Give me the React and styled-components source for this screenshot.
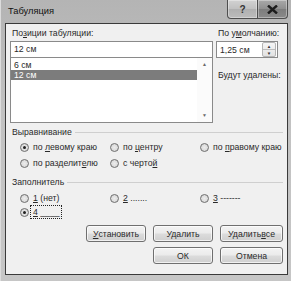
import React from 'react'
import styled, { createGlobalStyle } from 'styled-components'

const GlobalStyle = createGlobalStyle`
    html, body {
        margin: 0;
        padding: 0;
        background: #ffffff;
    }
    body {
        font-family: "Liberation Sans", Arial, sans-serif;
        font-size: 8.7px;
        color: #2a2a2a;
    }
`

const App = () => {
    return (
        <>
            <GlobalStyle />
            <Window>
                <TitleBar>
                    <Title>Табуляция</Title>
                    <Controls>
                        <CtrlButton>?</CtrlButton>
                        <CtrlButton close>
                            <svg width="11" height="9" viewBox="0 0 11 9">
                                <path d="M1 0.5 L10 8.5 M10 0.5 L1 8.5" stroke="#1c1c1c" strokeWidth="2.4" />
                            </svg>
                        </CtrlButton>
                    </Controls>
                </TitleBar>
                <Client>
                    <TopSection>
                        <Column>
                            <Label>По<U>з</U>иции табуляции:</Label>
                            <Edit>12 см</Edit>
                            <List>
                                <Rows>
                                    <Row>6 см</Row>
                                    <Row selected>12 см</Row>
                                </Rows>
                                <ScrollBar>
                                    <Arrow>▲</Arrow>
                                    <Arrow>▼</Arrow>
                                </ScrollBar>
                            </List>
                        </Column>
                        <Column>
                            <Label>По у<U>м</U>олчанию:</Label>
                            <Spin>
                                <SpinText>1,25 см</SpinText>
                                <SpinButtons>
                                    <SpinArrow>▲</SpinArrow>
                                    <SpinArrow>▼</SpinArrow>
                                </SpinButtons>
                            </Spin>
                            <Label gap={11}>Будут удалены:</Label>
                        </Column>
                    </TopSection>

                    <GroupHeader>
                        <span>Выравнивание</span>
                        <Rule />
                    </GroupHeader>
                    <RadioGrid rowh={16}>
                        <Radio checked>по <U>л</U>евому краю</Radio>
                        <Radio>по <U>ц</U>ентру</Radio>
                        <Radio>по <U>п</U>равому краю</Radio>
                        <Radio>по разделит<U>е</U>лю</Radio>
                        <Radio>с черто<U>й</U></Radio>
                    </RadioGrid>

                    <GroupHeader top={5}>
                        <span>Заполнитель</span>
                        <Rule />
                    </GroupHeader>
                    <RadioGrid rowh={14} top={3}>
                        <Radio><U>1</U> (нет)</Radio>
                        <Radio><U>2</U> .......</Radio>
                        <Radio><U>3</U> -------</Radio>
                        <Radio checked focus><U>4</U> ____</Radio>
                    </RadioGrid>

                    <ButtonRow top={6}>
                        <Button><U>У</U>становить</Button>
                        <Button>Удалить</Button>
                        <Button wide>Удалить{' '}<U>в</U>се</Button>
                    </ButtonRow>
                    <ButtonRow top={5}>
                        <Button>ОК</Button>
                        <Button wide>Отмена</Button>
                    </ButtonRow>
                </Client>
            </Window>
        </>
    )
}

const Radio = ({ checked, focus, children }) => (
    <RadioItem>
        <Circle checked={checked} />
        <RadioText focus={focus}>{children}</RadioText>
    </RadioItem>
)

export default App


const Window = styled.div`
    width: 291px;
    height: 281px;
    display: flex;
    flex-direction: column;
    background: linear-gradient(180deg, #b4b4b4 0%, #c2c2c2 40%, #c6c6c6 100%);
    box-shadow: inset 1px 0 0 #dcdcdc;
`

const TitleBar = styled.div`
    height: 23px;
    display: flex;
    align-items: flex-start;
    padding-left: 8px;
`

const Title = styled.div`
    margin-top: 6px;
    font-size: 9.3px;
    color: #111;
`

const Controls = styled.div`
    margin-left: auto;
    margin-right: 3px;
    display: flex;
`

const CtrlButton = styled.div`
    width: 29px;
    height: 18px;
    display: flex;
    align-items: center;
    justify-content: center;
    border: 1px solid #4e4e4e;
    border-top: none;
    border-left: ${p => p.close ? 'none' : '1px solid #4e4e4e'};
    border-radius: ${p => p.close ? '0 0 4px 0' : '0 0 0 4px'};
    background: ${p => p.close
        ? 'linear-gradient(180deg, #a9a9a9 0%, #8f8f8f 50%, #7d7d7d 52%, #8a8a8a 100%)'
        : 'linear-gradient(180deg, #d2d2d2 0%, #c0c0c0 50%, #b0b0b0 52%, #bcbcbc 100%)'};
    font-weight: bold;
    font-size: 10px;
    color: #333;
    box-shadow: inset 0 0 0 1px rgba(255,255,255,0.35);
`

const Client = styled.div`
    flex: 1;
    margin: 0 3px 6px 5px;
    border: 1px solid #3a3a3a;
    background: #f0f0f0;
    padding: 3px 4px 0 4px;
    display: flex;
    flex-direction: column;
`

const TopSection = styled.div`
    display: grid;
    grid-template-columns: 203px 62px;
    column-gap: 3px;
`

const Column = styled.div`
    display: flex;
    flex-direction: column;
`

const Label = styled.div`
    height: 13px;
    line-height: 13px;
    padding-left: 2px;
    margin-top: ${p => p.gap || 0}px;
    margin-bottom: 1px;
    white-space: nowrap;
`

const U = styled.span`
    text-decoration: underline;
`

const Edit = styled.div`
    height: 15px;
    line-height: 15px;
    border: 1px solid #8a8a8a;
    background: #fff;
    padding-left: 3px;
`

const List = styled.div`
    height: 64px;
    border: 1px solid #8a8a8a;
    border-top: none;
    background: #fff;
    display: flex;
`

const Rows = styled.div`
    flex: 1;
    padding-top: 2px;
`

const Row = styled.div`
    height: 10px;
    line-height: 10px;
    padding-left: 3px;
    background: ${p => p.selected ? '#7c7c7c' : 'transparent'};
    color: ${p => p.selected ? '#ffffff' : '#2a2a2a'};
`

const ScrollBar = styled.div`
    width: 15px;
    display: flex;
    flex-direction: column;
    justify-content: space-between;
    align-items: center;
    padding: 3px 0 4px;
    background: #fbfbfb;
`

const Arrow = styled.span`
    font-size: 5px;
    color: #6a6a6a;
`

const Spin = styled.div`
    height: 15px;
    border: 1px solid #8a8a8a;
    background: #fff;
    display: flex;
    align-items: center;
`

const SpinText = styled.span`
    flex: 1;
    padding-left: 3px;
`

const SpinButtons = styled.div`
    width: 12px;
    height: 13px;
    margin-right: 1px;
    display: flex;
    flex-direction: column;
    border: 1px solid #b5b5b5;
    border-radius: 2px;
    background: linear-gradient(180deg, #f6f6f6, #e2e2e2);
`

const SpinArrow = styled.span`
    flex: 1;
    display: flex;
    align-items: center;
    justify-content: center;
    font-size: 4.5px;
    color: #333;
    & + & {
        border-top: 1px solid #bcbcbc;
    }
`

const GroupHeader = styled.div`
    margin-top: ${p => p.top || 3}px;
    height: 12px;
    padding-left: 2px;
    display: flex;
    align-items: center;
    gap: 3px;
    white-space: nowrap;
`

const Rule = styled.div`
    flex: 1;
    border-top: 1px solid #cfcfcf;
    margin-top: 1px;
`

const RadioGrid = styled.div`
    margin-top: ${p => p.top || 1}px;
    padding-left: 10px;
    display: grid;
    grid-template-columns: 90px 90px 1fr;
    grid-auto-rows: ${p => p.rowh}px;
`

const RadioItem = styled.div`
    display: flex;
    align-items: center;
    gap: 4px;
    white-space: nowrap;
`

const Circle = styled.span`
    width: 9px;
    height: 9px;
    border-radius: 50%;
    border: 1px solid #6e6e6e;
    background: radial-gradient(circle, #ececec 0%, #d2d2d2 100%);
    position: relative;
    box-sizing: border-box;
    flex: none;

    &::after {
        content: "";
        display: ${p => p.checked ? 'block' : 'none'};
        position: absolute;
        left: 2px;
        top: 2px;
        width: 3px;
        height: 3px;
        border-radius: 50%;
        background: #202020;
    }
`

const RadioText = styled.span`
    padding: 1px 2px;
    margin-left: -2px;
    outline: ${p => p.focus ? '1px dotted #222' : 'none'};
    width: ${p => p.focus ? '26px' : 'auto'};
`

const ButtonRow = styled.div`
    margin-top: ${p => p.top}px;
    display: flex;
    justify-content: flex-end;
    gap: 7px;
`

const Button = styled.div`
    width: ${p => p.wide ? 63 : 60}px;
    height: 17px;
    box-sizing: border-box;
    border: 1px solid #6f6f6f;
    border-radius: 3px;
    background: linear-gradient(180deg, #f3f3f3 0%, #ebebeb 48%, #dcdcdc 52%, #cfcfcf 100%);
    box-shadow: inset 0 0 0 1px rgba(255,255,255,0.7);
    display: flex;
    align-items: center;
    justify-content: center;
    white-space: nowrap;
`
